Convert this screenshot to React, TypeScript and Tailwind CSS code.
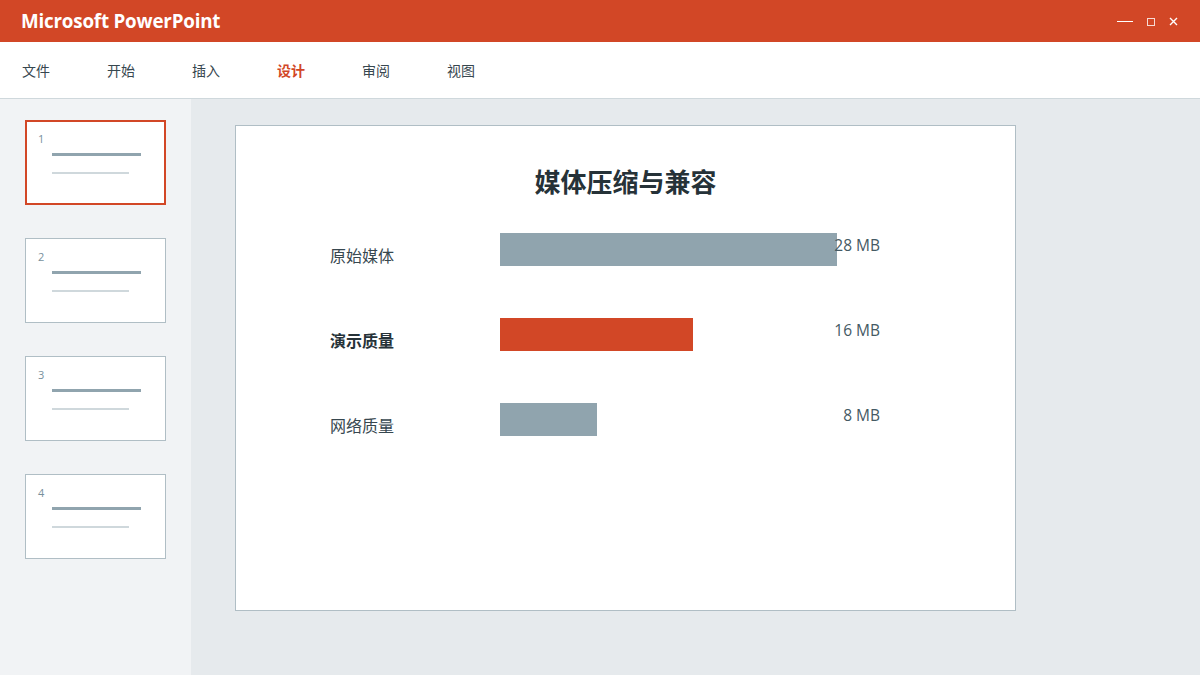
import React from 'react';

const font = { fontFamily: '"Open Sans", "Noto Sans CJK SC", sans-serif' };

const tabs = ['文件', '开始', '插入', '设计', '审阅', '视图'];

const rows = [
  { label: '原始媒体', size: 28, width: 337, accent: false },
  { label: '演示质量', size: 16, width: 193, accent: true },
  { label: '网络质量', size: 8, width: 97, accent: false },
];

const Thumb = ({ n, active }: { n: number; active?: boolean }) => (
  <div
    className={`w-[141px] h-[85px] bg-white pt-[10px] ${
      active ? 'border-2 border-[#d24726] pl-[11px]' : 'border border-[#b0bec5] pl-[12px]'
    }`}
  >
    <div className={`text-[11px] leading-[14px] text-[#78909c] ${active ? '' : 'pt-px'}`}>{n}</div>
    <div className="h-[3px] w-[89px] bg-[#90a4ae] ml-[14px] mt-[7px]" />
    <div className="h-[2px] w-[77px] bg-[#cfd8dc] ml-[14px] mt-[16px]" />
  </div>
);

export default function App() {
  return (
    <div className="w-[1200px] h-[675px] flex flex-col overflow-hidden bg-[#e6eaed]" style={font}>
      {/* title bar */}
      <div className="h-[42px] shrink-0 bg-[#d24726] flex items-center justify-between pl-[21px] pr-[22px]">
        <span className="text-white font-bold text-[18.8px] tracking-[-0.2px]">Microsoft PowerPoint</span>
        <div className="flex items-center gap-[14px] text-white">
          <div className="w-[16px] h-px bg-white mt-[1px]" />
          <div className="w-[8px] h-[8px] border border-white/80 mt-[2px]" />
          <svg width="9" height="9" viewBox="0 0 9 9" className="mt-[1px]">
            <path d="M1 1L8 8M8 1L1 8" stroke="white" strokeWidth="1.4" />
          </svg>
        </div>
      </div>

      {/* ribbon tabs */}
      <div className="h-[57px] shrink-0 bg-white border-b border-[#cfd8dc] flex items-center pl-[22px]">
        {tabs.map((t) => (
          <span
            key={t}
            className={`w-[85px] text-[14px] ${t === '设计' ? 'font-bold text-[#d24726]' : 'text-[#37474f]'}`}
          >
            {t}
          </span>
        ))}
      </div>

      <div className="flex-1 flex min-h-0">
        {/* slide list */}
        <div className="w-[191px] shrink-0 bg-[#f1f3f5] flex flex-col gap-[33px] pl-[25px] pt-[21px]">
          {[1, 2, 3, 4].map((n) => (
            <Thumb key={n} n={n} active={n === 1} />
          ))}
        </div>

        {/* canvas */}
        <div className="flex-1 pl-[44px] pt-[26px]">
          <div className="w-[781px] h-[486px] bg-white border border-[#b0bec5] flex flex-col">
            <h1 className="text-center text-[26px] font-bold text-[#263238] mt-[37px] leading-[38px]">
              媒体压缩与兼容
            </h1>
            <div className="flex flex-col gap-[52px] mt-[32px] pl-[94px]">
              {rows.map((r) => (
                <div key={r.label} className="flex h-[33px]">
                  <span
                    className={`w-[170px] self-end text-[16px] leading-[20px] ${
                      r.accent ? 'font-bold text-[#263238]' : 'text-[#37474f]'
                    }`}
                  >
                    {r.label}
                  </span>
                  <div className="relative w-[380px]">
                    <div
                      className={`h-[33px] ${r.accent ? 'bg-[#d24726]' : 'bg-[#90a4ae]'}`}
                      style={{ width: r.width }}
                    />
                    <span className="absolute right-0 top-[1px] text-[15.5px] leading-[22px] text-[#455a64]">
                      {r.size} MB
                    </span>
                  </div>
                </div>
              ))}
            </div>
          </div>
        </div>
      </div>
    </div>
  );
}
